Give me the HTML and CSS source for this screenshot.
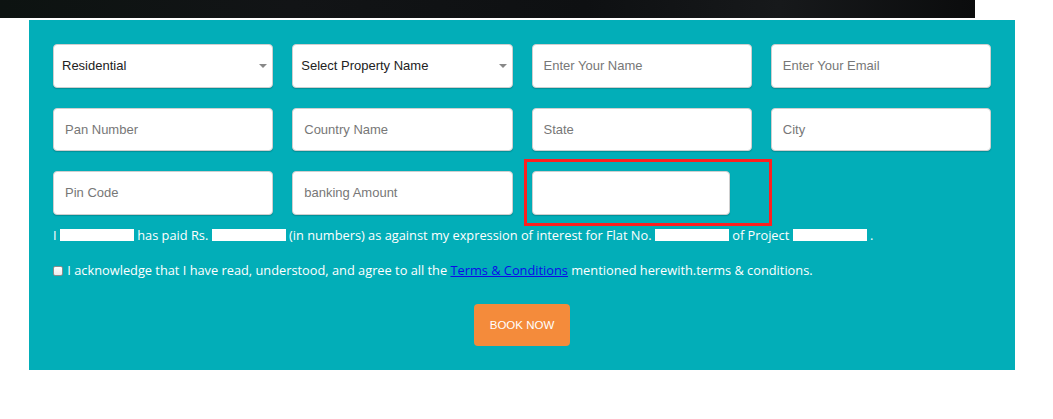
FILE: index.html
```html
<!DOCTYPE html>
<html lang="en">
<head>
<meta charset="utf-8">
<title>Booking Form</title>
<link rel="stylesheet" href="styles.css">
</head>
<body>
<div class="hero-strip"></div>
<section class="booking">
  <form class="booking-form">
    <div class="fields">
      <div class="select-wrap">
        <select class="field select"><option>Residential</option></select>
        <span class="caret"></span>
      </div>
      <div class="select-wrap">
        <select class="field select"><option>Select Property Name</option></select>
        <span class="caret"></span>
      </div>
      <input class="field" type="text" placeholder="Enter Your Name">
      <input class="field" type="email" placeholder="Enter Your Email">

      <input class="field" type="text" placeholder="Pan Number">
      <input class="field" type="text" placeholder="Country Name">
      <input class="field" type="text" placeholder="State">
      <input class="field" type="text" placeholder="City">

      <input class="field" type="text" placeholder="Pin Code">
      <input class="field" type="text" placeholder="banking Amount">
      <div class="highlight-cell">
        <input class="field narrow" type="text">
        <span class="highlight"></span>
      </div>
    </div>

    <p class="declaration">I <span class="blank"></span> has paid Rs. <span class="blank"></span> (in numbers) as against my expression of interest for Flat No. <span class="blank"></span> of Project <span class="blank"></span> .</p>

    <label class="agree"><input type="checkbox" class="check"> I acknowledge that I have read, understood, and agree to all the <a href="#">Terms &amp; Conditions</a> mentioned herewith.terms &amp; conditions.</label>

    <div class="actions">
      <button type="button" class="book-btn">BOOK NOW</button>
    </div>
  </form>
</section>
</body>
</html>
```

FILE: styles.css
```css
* { box-sizing: border-box; }

body {
  margin: 0;
  background: #ffffff;
  font-family: "Liberation Sans", Arial, sans-serif;
}

.hero-strip {
  width: 975px;
  height: 18px;
  background: linear-gradient(90deg, #0d1311 0%, #121416 30%, #0e1012 60%, #17191b 80%, #0b0c0d 100%);
}

.booking {
  margin: 2px 0 0 29px;
  width: 986px;
  background: #02aeb8;
  padding: 24px 24px 24px 24px;
}

.fields {
  display: grid;
  grid-template-columns: repeat(4, 1fr);
  column-gap: 19px;
  row-gap: 20px;
}

.field {
  display: block;
  width: 100%;
  height: 43.5px;
  margin: 0;
  border: 1px solid #cfcfcf;
  border-radius: 4px;
  background: #ffffff;
  box-shadow: 0 1px 1px rgba(0, 0, 0, 0.18);
  padding: 0 11px;
  font-family: "Liberation Sans", Arial, sans-serif;
  font-size: 13px;
  color: #222;
  outline: none;
}

.field::placeholder {
  color: #777;
  opacity: 1;
}

.select-wrap {
  position: relative;
}

.select {
  appearance: none;
  -webkit-appearance: none;
  padding-left: 8px;
  color: #222;
}

.caret {
  position: absolute;
  right: 6px;
  top: 20px;
  width: 0;
  height: 0;
  border-left: 4px solid transparent;
  border-right: 4px solid transparent;
  border-top: 4px solid #888;
  pointer-events: none;
}

.highlight-cell {
  position: relative;
}

.field.narrow {
  width: 198px;
}

.highlight {
  position: absolute;
  left: -8px;
  top: -12px;
  right: -20px;
  bottom: -11px;
  border: 3px solid #ff1f1f;
  pointer-events: none;
}

.declaration {
  margin: 10px 0 0 0;
  line-height: 20px;
  font-family: "Open Sans", sans-serif;
  font-size: 12.8px;
  color: #ffffff;
}

.blank {
  display: inline-block;
  width: 74px;
  height: 12px;
  background: #ffffff;
  vertical-align: -1px;
}

.agree {
  display: block;
  margin-top: 15px;
  line-height: 20px;
  font-family: "Open Sans", sans-serif;
  font-size: 12.8px;
  color: #ffffff;
}

.agree a {
  color: #0b0be8;
  text-decoration: underline;
}

.check {
  appearance: none;
  -webkit-appearance: none;
  width: 10px;
  height: 10px;
  margin: 0 1px 0 0;
  border: 1px solid #8c8c8c;
  border-radius: 2px;
  background: linear-gradient(#ffffff, #ececec);
  vertical-align: -1px;
}

.actions {
  display: flex;
  justify-content: center;
  margin-top: 24px;
}

.book-btn {
  width: 96px;
  height: 42px;
  border: none;
  border-radius: 4px;
  background: #f48b3b;
  color: #ffffff;
  font-family: "Liberation Sans", Arial, sans-serif;
  font-size: 11.5px;
  padding: 0;
}
```
